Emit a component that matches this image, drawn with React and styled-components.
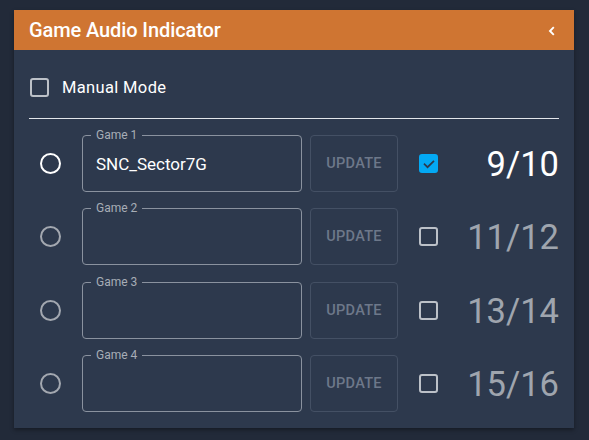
import styled, { createGlobalStyle } from "styled-components";

const GlobalStyle = createGlobalStyle`
  html, body {
    margin: 0;
    padding: 0;
    background: #222a39;
  }
  body {
    font-family: Roboto, "Noto Sans", sans-serif;
    -webkit-font-smoothing: antialiased;
  }
`;

const games = [
  { label: "Game 1", value: "SNC_Sector7G", channels: "9/10", active: true },
  { label: "Game 2", value: "", channels: "11/12", active: false },
  { label: "Game 3", value: "", channels: "13/14", active: false },
  { label: "Game 4", value: "", channels: "15/16", active: false },
];

const CheckIcon = () => (
  <svg width="14" height="14" viewBox="0 0 24 24">
    <path
      d="M4.5 12.5l5 5L19.5 7.5"
      fill="none"
      stroke="#2d394d"
      strokeWidth="3"
      strokeLinecap="square"
    />
  </svg>
);

const ChevronLeft = () => (
  <svg width="12" height="12" viewBox="0 0 12 12">
    <path
      d="M7.8 2.2L4 6l3.8 3.8"
      fill="none"
      stroke="#ffffff"
      strokeWidth="1.9"
    />
  </svg>
);

export default function App() {
  return (
    <Page>
      <GlobalStyle />
      <Card>
        <Header>
          <Title>Game Audio Indicator</Title>
          <CollapseButton aria-label="collapse">
            <ChevronLeft />
          </CollapseButton>
        </Header>
        <Body>
          <ModeRow>
            <Box />
            <ModeLabel>Manual Mode</ModeLabel>
          </ModeRow>
          <Divider />
          <GameList>
            {games.map((g) => (
              <GameRow key={g.label}>
                <Radio $active={g.active} />
                <Field>
                  <FieldLabel>{g.label}</FieldLabel>
                  <FieldValue>{g.value}</FieldValue>
                </Field>
                <UpdateButton disabled>UPDATE</UpdateButton>
                <Box $small $checked={g.active}>
                  {g.active && <CheckIcon />}
                </Box>
                <Channels $active={g.active}>{g.channels}</Channels>
              </GameRow>
            ))}
          </GameList>
        </Body>
      </Card>
    </Page>
  );
}

const Page = styled.div`
  padding: 10px 15px 13px 14px;
`;

const Card = styled.div`
  width: 560px;
  background: #2d394d;
  box-shadow: 0 2px 4px rgba(0, 0, 0, 0.35);
`;

const Header = styled.div`
  height: 40px;
  background: #cf7532;
  display: flex;
  align-items: center;
  justify-content: space-between;
  padding: 0 15px 0 15px;
`;

const Title = styled.h2`
  margin: 0;
  color: #ffffff;
  font-size: 20px;
  font-weight: 500;
  letter-spacing: -0.1px;
`;

const CollapseButton = styled.button`
  border: 0;
  background: transparent;
  padding: 0;
  display: flex;
  align-items: center;
  margin-right: 1px;
  margin-top: 2px;
`;

const Body = styled.div`
  padding: 24px 15px 16px;
`;

const ModeRow = styled.div`
  height: 26px;
  display: flex;
  align-items: center;
  gap: 13px;
  padding-left: 1px;
`;

const ModeLabel = styled.span`
  color: #ffffff;
  font-size: 16.5px;
  letter-spacing: 0.35px;
`;

const Box = styled.span`
  box-sizing: border-box;
  width: 19px;
  height: 19px;
  border-radius: 3px;
  border: 2px solid ${(p) => (p.$checked ? "#03a9f4" : "#bcc1c8")};
  background: ${(p) => (p.$checked ? "#03a9f4" : "transparent")};
  display: flex;
  align-items: center;
  justify-content: center;
  flex-shrink: 0;
  margin-left: ${(p) => (p.$small ? 21 : 0)}px;
`;

const Divider = styled.hr`
  margin: 18px 0 16px;
  border: 0;
  height: 1px;
  background: #e2e5ea;
`;

const GameList = styled.div`
  display: flex;
  flex-direction: column;
  gap: 16.4px;
`;

const GameRow = styled.div`
  display: flex;
  align-items: center;
  height: 57px;
`;

const Radio = styled.span`
  box-sizing: border-box;
  width: 21px;
  height: 21px;
  border-radius: 50%;
  border: 2px solid ${(p) => (p.$active ? "#ffffff" : "#a3a8b0")};
  margin: 0 21px 0 11px;
  flex-shrink: 0;
`;

const Field = styled.div`
  position: relative;
  box-sizing: border-box;
  width: 220px;
  height: 57px;
  border: 1px solid #8a929f;
  border-radius: 4px;
  display: flex;
  align-items: center;
  padding: 0 13px;
`;

const FieldLabel = styled.span`
  position: absolute;
  top: -8px;
  left: 8px;
  padding: 0 5px;
  background: #2d394d;
  color: #a7adb6;
  font-size: 12px;
  line-height: 14px;
`;

const FieldValue = styled.span`
  color: #ffffff;
  font-size: 17px;
  margin-top: 1px;
`;

const UpdateButton = styled.button`
  box-sizing: border-box;
  width: 88px;
  height: 57px;
  margin-left: 8px;
  border: 1px solid #445064;
  border-radius: 4px;
  background: transparent;
  color: #6d788a;
  font-family: Roboto, "Noto Sans", sans-serif;
  font-size: 14.5px;
  font-weight: 500;
  letter-spacing: 0.3px;
`;

const Channels = styled.span`
  flex: 1;
  text-align: right;
  font-size: 34.5px;
  color: ${(p) => (p.$active ? "#ffffff" : "#9fa5ae")};
  margin-top: 1px;
`;
